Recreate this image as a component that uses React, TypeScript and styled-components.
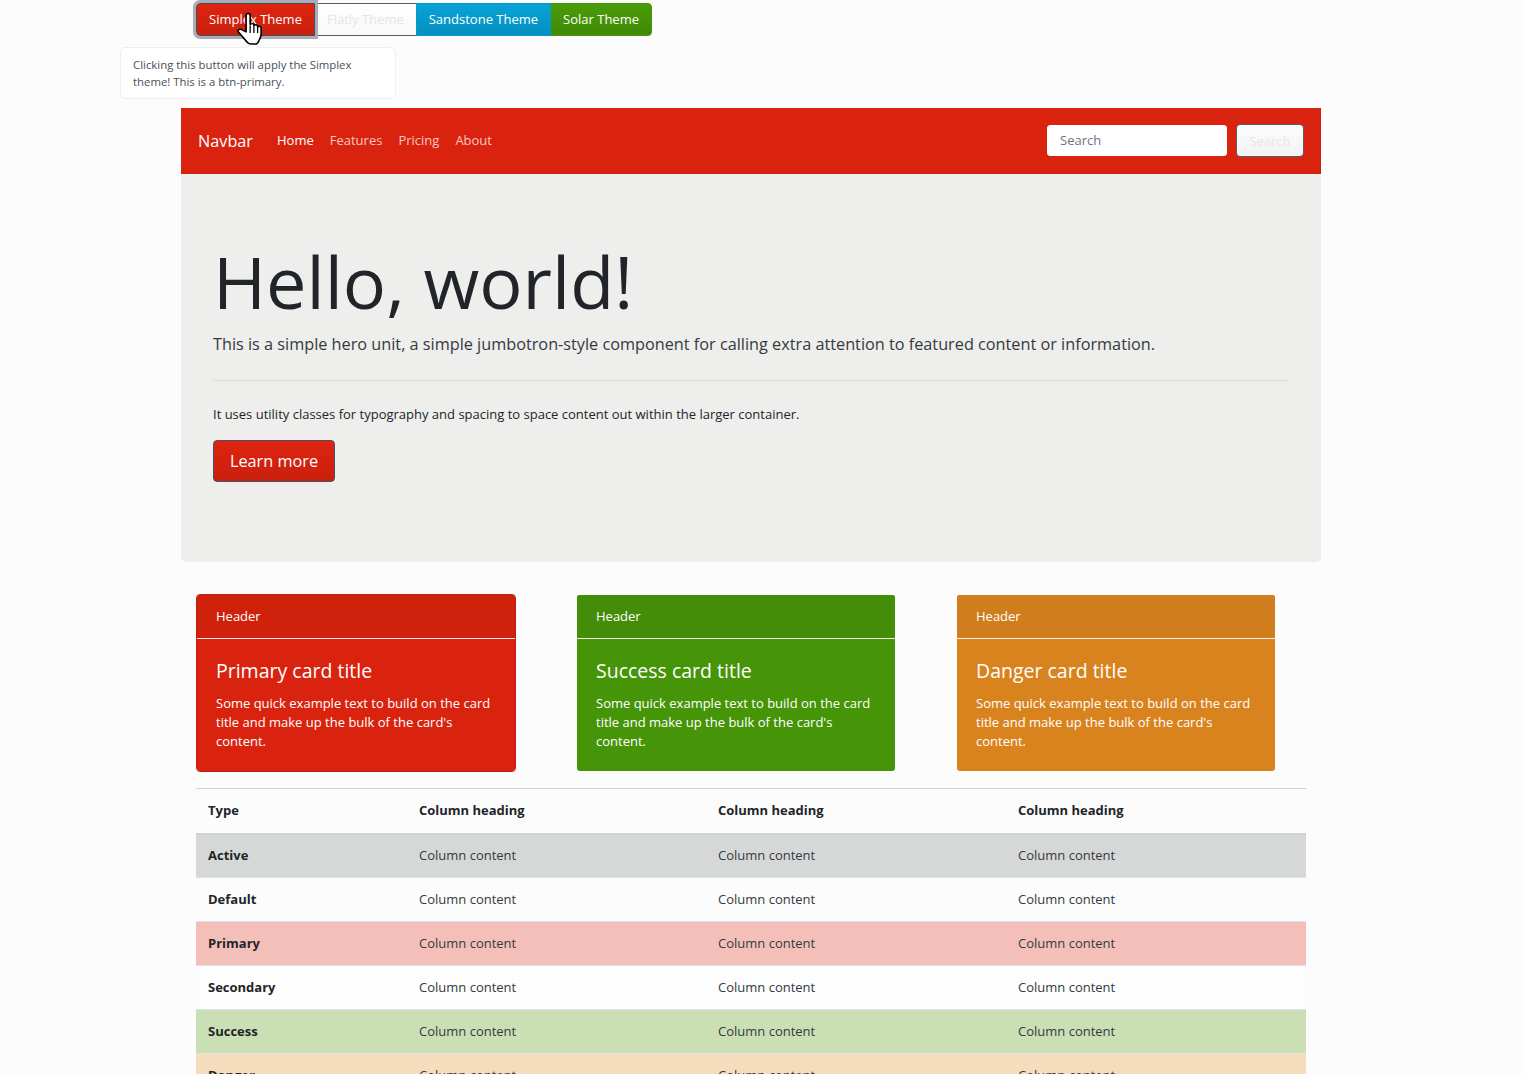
import React from "react";
import styled, { createGlobalStyle } from "styled-components";

const GlobalStyle = createGlobalStyle`
  html, body {
    margin: 0;
    height: 100%;
    overflow: hidden;
    background: #fcfcfc;
    color: #212529;
    font-family: "Open Sans", "Liberation Sans", sans-serif;
    font-size: 13px;
    line-height: 19.5px;
  }
  * { box-sizing: border-box; }
`;

const Page = styled.div`
  position: relative;
  width: 1524px;
  height: 1074px;
  overflow: hidden;
`;

const ThemeBar = styled.div`
  display: flex;
  width: fit-content;
  height: 33px;
  margin: 3px 0 0 196px;
`;

const ThemeButton = styled.button<{ $bg: string; $fg?: string; $border: string; $first?: boolean; $last?: boolean; $ring?: boolean }>`
  position: relative;
  height: 33px;
  margin-left: ${(p) => (p.$first ? "0" : "-1px")};
  padding: 0 12px;
  border: 1px solid ${(p) => p.$border};
  border-radius: ${(p) => (p.$first ? "4px 0 0 4px" : p.$last ? "0 4px 4px 0" : "0")};
  background: ${(p) => p.$bg};
  color: ${(p) => p.$fg ?? "#fff"};
  font: 13px/19.5px "Open Sans", sans-serif;
  box-shadow: ${(p) => (p.$ring ? "0 0 0 3px #a9adb8" : "none")};
  z-index: ${(p) => (p.$ring ? 2 : p.$last ? 0 : 1)};
`;

const Popover = styled.div`
  position: absolute;
  left: 120px;
  top: 47px;
  width: 276px;
  height: 52px;
  padding: 8px 12px;
  background: #fff;
  border: 1px solid #eeeeee;
  border-radius: 5px;
  color: #495057;
  font-size: 11.375px;
  line-height: 17px;
  &::before {
    content: "";
    position: absolute;
    top: -5px;
    left: 127px;
    width: 8px;
    height: 8px;
    background: #fff;
    border-left: 1px solid #eee;
    border-top: 1px solid #eee;
    transform: rotate(45deg);
  }
`;

const HandCursor = styled.svg`
  position: absolute;
  left: 235px;
  top: 12px;
  width: 28px;
  height: 34px;
  z-index: 3;
`;

const Container = styled.div`
  width: 1140px;
  margin: 72px 0 0 181px;
`;

const Navbar = styled.nav`
  display: flex;
  align-items: center;
  height: 66px;
  padding: 0 16px 0 17px;
  background: #d9230f;
  border: 1px solid #c91f0d;
  border-width: 0 1px 1px 0;
`;

const Brand = styled.a`
  margin-right: 16px;
  color: #fff;
  font-size: 16.25px;
  line-height: 24px;
`;

const NavLink = styled.a<{ $active?: boolean }>`
  padding: 0 8px;
  color: ${(p) => (p.$active ? "#fff" : "rgba(255, 255, 255, 0.75)")};
`;

const SearchForm = styled.form`
  display: flex;
  align-items: center;
  gap: 9px;
  margin-left: auto;
`;

const SearchInput = styled.input`
  width: 180px;
  height: 31px;
  padding: 0 12px 2px;
  border: 1px solid #fff;
  border-radius: 3px;
  background: #fff;
  font: 13px "Open Sans", sans-serif;
  &::placeholder {
    color: #6c757d;
    opacity: 1;
  }
`;

const SearchButton = styled.button`
  width: 68px;
  height: 33px;
  padding: 0;
  border: 1px solid #5d5e60;
  border-radius: 4px;
  background: linear-gradient(#fcfcfc, #f3f3f5);
  color: #e6e7e9;
  font: 13px "Open Sans", sans-serif;
`;

const Jumbotron = styled.section`
  height: 388px;
  padding: 64px 32px 0;
  background: #eeeeec;
  border-radius: 0 0 5px 5px;
`;

const Display = styled.h1`
  margin: 0 0 8px;
  height: 86px;
  font-size: 72px;
  font-weight: 400;
  line-height: 87px;
`;

const Lead = styled.p`
  margin: 0;
  font-size: 16.25px;
  line-height: 24px;
  color: #343a40;
`;

const Rule = styled.hr`
  height: 1px;
  margin: 24px 0;
  border: 0;
  background: #d9d9d7;
`;

const Note = styled.p`
  margin: 0 0 15px;
  color: #212529;
`;

const LearnMore = styled.a`
  display: inline-flex;
  align-items: center;
  justify-content: center;
  width: 122px;
  height: 42px;
  padding-top: 2px;
  border: 1px solid #485068;
  border-radius: 4px;
  background: linear-gradient(#de2410, #c9200e);
  color: #fff;
  font-size: 16.25px;
`;

const Content = styled.div`
  padding: 32px 15px 0;
`;

const CardRow = styled.div`
  display: grid;
  grid-template-columns: repeat(3, 380px);
`;

// cards other than the primary one show no border, so they read 2px smaller
const Card = styled.article<{ $bg: string; $head: string; $border: string }>`
  width: 320px;
  height: 178px;
  border: 1px solid ${(p) => p.$border};
  border-radius: 4px;
  background: ${(p) => p.$bg};
  background-clip: padding-box;
  color: #fff;
  overflow: hidden;
  & > header {
    background: ${(p) => p.$head};
  }
`;

const CardHeader = styled.header`
  height: 44px;
  padding: 12px 19px 0;
  border-bottom: 1px solid rgba(255, 255, 255, 0.9);
`;

const CardBody = styled.div`
  padding: 20px 19px;
`;

const CardTitle = styled.h4`
  margin: 0 0 11px;
  font-size: 19.5px;
  font-weight: 400;
  line-height: 24px;
`;

const CardText = styled.p`
  margin: 0;
  line-height: 19px;
`;

const Table = styled.table`
  width: 1110px;
  margin-top: 16px;
  border-collapse: collapse;
  table-layout: fixed;
`;

const HeadCell = styled.th<{ $w: number }>`
  width: ${(p) => p.$w}px;
  height: 45px;
  padding: 0 12px;
  border-top: 1px solid #cfd1d2;
  border-bottom: 2px solid #cfd1d2;
  text-align: left;
  font-weight: 700;
`;

const Row = styled.tr<{ $bg?: string }>`
  height: 44px;
  background: ${(p) => p.$bg ?? "transparent"};
  border-bottom: 1px solid #dee2e6;
`;

const RowHead = styled.th`
  padding: 0 12px;
  text-align: left;
  font-weight: 700;
`;

const Cell = styled.td`
  padding: 0 12px;
  color: #343a40;
`;

const cards = [
  { bg: "#d9230f", head: "#d0210d", border: "#c11f0d", title: "Primary card title" },
  { bg: "#469408", head: "#438d08", border: "transparent", title: "Success card title" },
  { bg: "#d9831f", head: "#d07d1e", border: "transparent", title: "Danger card title" },
];

const rows = [
  { name: "Active", bg: "#d6d8d8" },
  { name: "Default" },
  { name: "Primary", bg: "#f4bfb9" },
  { name: "Secondary", bg: "#fdfdfd" },
  { name: "Success", bg: "#cbdfb4" },
  { name: "Danger", bg: "#f4dcbd" },
];

export default function App() {
  return (
    <Page>
      <GlobalStyle />
      <ThemeBar>
        <ThemeButton $bg="linear-gradient(#de2410, #c9200e)" $border="#4b4f55" $first $ring>
          Simplex Theme
        </ThemeButton>
        <ThemeButton $bg="linear-gradient(#fff, #f8f8f8)" $fg="#e4e6e8" $border="#5d5e60">
          Flatly Theme
        </ThemeButton>
        <ThemeButton $bg="linear-gradient(#08a3d6, #0590c0)" $border="#029acf">
          Sandstone Theme
        </ThemeButton>
        <ThemeButton $bg="linear-gradient(#4a9c08, #408a07)" $border="#469408" $last>
          Solar Theme
        </ThemeButton>
      </ThemeBar>

      <HandCursor viewBox="0 0 24 34" preserveAspectRatio="none">
        <path
          d="M9.5 3c0-2 3.5-2 3.5 0V13c.3-1.8 3-1.8 3.2 0v1c.3-1.7 3-1.6 3.2.2v1c.4-1.5 2.9-1.2 3 .8v6c0 3-1 4.5-2 7-.5 1.5-1 2.5-2 3h-5c-1.5 0-2.5-1-3.5-2.5L3 20c-1.2-1.8.6-3.5 2.3-2.5L9.5 20Z"
          fill="#fff"
          stroke="#000"
          strokeWidth="1.4"
          strokeLinejoin="round"
        />
        <path d="M13 14v7M16.2 14.5V21M19.4 15.5V21" stroke="#000" strokeWidth="1.1" fill="none" />
      </HandCursor>

      <Popover>
        Clicking this button will apply the Simplex
        <br />
        theme! This is a btn-primary.
      </Popover>

      <Container>
        <Navbar>
          <Brand>Navbar</Brand>
          <NavLink $active>Home</NavLink>
          <NavLink>Features</NavLink>
          <NavLink>Pricing</NavLink>
          <NavLink>About</NavLink>
          <SearchForm>
            <SearchInput placeholder="Search" />
            <SearchButton type="button">Search</SearchButton>
          </SearchForm>
        </Navbar>

        <Jumbotron>
          <Display>Hello, world!</Display>
          <Lead>
            This is a simple hero unit, a simple jumbotron-style component for calling extra attention to
            featured content or information.
          </Lead>
          <Rule />
          <Note>It uses utility classes for typography and spacing to space content out within the larger container.</Note>
          <LearnMore>Learn more</LearnMore>
        </Jumbotron>

        <Content>
          <CardRow>
            {cards.map((c) => (
              <Card key={c.title} $bg={c.bg} $head={c.head} $border={c.border}>
                <CardHeader>Header</CardHeader>
                <CardBody>
                  <CardTitle>{c.title}</CardTitle>
                  <CardText>
                    Some quick example text to build on the card title and make up the bulk of the card's content.
                  </CardText>
                </CardBody>
              </Card>
            ))}
          </CardRow>

          <Table>
            <thead>
              <tr>
                <HeadCell $w={211}>Type</HeadCell>
                <HeadCell $w={299}>Column heading</HeadCell>
                <HeadCell $w={300}>Column heading</HeadCell>
                <HeadCell $w={300}>Column heading</HeadCell>
              </tr>
            </thead>
            <tbody>
              {rows.map((r) => (
                <Row key={r.name} $bg={r.bg}>
                  <RowHead>{r.name}</RowHead>
                  <Cell>Column content</Cell>
                  <Cell>Column content</Cell>
                  <Cell>Column content</Cell>
                </Row>
              ))}
            </tbody>
          </Table>
        </Content>
      </Container>
    </Page>
  );
}
